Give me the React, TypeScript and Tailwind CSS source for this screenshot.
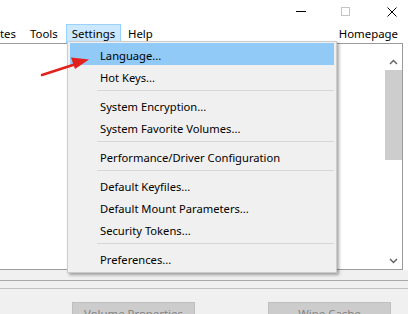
const FONT = 'font-["Noto_Sans","Segoe_UI",sans-serif]';

type Entry = { label: string; active?: boolean } | 'sep';

const ITEMS: Entry[] = [
  { label: 'Language...', active: true },
  { label: 'Hot Keys...' },
  'sep',
  { label: 'System Encryption...' },
  { label: 'System Favorite Volumes...' },
  'sep',
  { label: 'Performance/Driver Configuration' },
  'sep',
  { label: 'Default Keyfiles...' },
  { label: 'Default Mount Parameters...' },
  { label: 'Security Tokens...' },
  'sep',
  { label: 'Preferences...' },
];

function SettingsMenu() {
  return (
    <div className="absolute left-0 top-[calc(100%-1px)] z-20 w-[270px] border border-[#cccccc] bg-[#f0f0f0] px-[2px] pt-[1px] pb-[3px] text-[11.2px] shadow-[2px_2px_3px_rgba(0,0,0,0.35)]">
      {ITEMS.map((it, i) =>
        it === 'sep' ? (
          <div key={i} className="flex h-[7px] items-center pl-[27px]">
            <div className="h-px w-full bg-[#d7d7d7]" />
          </div>
        ) : (
          <div
            key={i}
            className={`h-[22px] pl-[30px] pt-[2px] leading-[22px] text-black ${it.active ? 'bg-[#91c9f7]' : ''}`}
          >
            {it.label}
          </div>
        )
      )}
    </div>
  );
}

function Chevron({ up }: { up?: boolean }) {
  return (
    <svg width="9" height="6" viewBox="0 0 9 6" className={up ? '' : 'rotate-180'}>
      <polyline points="1,5 4.5,1.5 8,5" fill="none" stroke="#606060" strokeWidth="1.4" />
    </svg>
  );
}

export default function App() {
  return (
    <div className={`relative h-[314px] w-[408px] overflow-hidden bg-white text-[11.4px] leading-none text-black ${FONT}`}>
      {/* title bar */}
      <div className="flex h-[24px] items-start">
        <div className="ml-[296px] mt-[11px] h-px w-[10px] bg-black" />
        <div className="ml-[35px] mt-[7px] h-[9px] w-[9px] border border-[#c4c4c4]" />
        <svg className="ml-[37px] mt-[7px]" width="10" height="10" viewBox="0 0 10 10">
          <path d="M0.5 0.5 L9.5 9.5 M9.5 0.5 L0.5 9.5" stroke="#000" strokeWidth="1" />
        </svg>
      </div>

      {/* menu bar */}
      <div className="relative z-10 flex h-[19px] items-stretch">
        <div className="flex w-[23px] items-center">tes</div>
        <div className="flex w-[43px] items-center pl-[7px]">Tools</div>
        <div className="relative flex w-[55px] items-center justify-center border border-[#99d1ff] bg-[#cce8ff]">
          Settings
          <SettingsMenu />
        </div>
        <div className="flex items-center pl-[7px]">Help</div>
        <div className="ml-auto mr-[10px] flex items-center">Homepage</div>
      </div>

      {/* volume list */}
      <div className="flex h-[227px] w-[403px] border-y border-r border-[#9a9a9a] bg-white">
        <div className="flex-1" />
        <div className="flex w-[17px] flex-col pt-[10px]">
          <div className="flex h-[16px] items-center justify-center">
            <Chevron up />
          </div>
          <div className="h-[90px] bg-[#cdcdcd]" />
          <div className="flex-1" />
          <div className="flex h-[17px] items-center justify-center">
            <Chevron />
          </div>
        </div>
      </div>

      {/* lower panel */}
      <div className="h-full bg-[#f0f0f0] pt-[10px]">
        <div className="h-px bg-[#a8a8a8]" />
        <div className="mt-[7px] h-px bg-[#c2c2c2]" />
        <div className="mt-[13px] flex gap-[73px] pl-[72px]">
          <div className="flex h-[23px] w-[123px] items-center justify-center border border-[#bfbfbf] bg-[#cccccc] text-[#838383]">
            Volume Properties
          </div>
          <div className="flex h-[23px] w-[123px] items-center justify-center border border-[#bfbfbf] bg-[#cccccc] text-[#838383]">
            Wipe Cache
          </div>
        </div>
      </div>

      {/* red annotation arrow */}
      <svg className="pointer-events-none absolute left-0 top-0 z-30" width="408" height="314">
        <line x1="42" y1="75" x2="76" y2="64" stroke="#e3201b" strokeWidth="2.5" strokeLinecap="round" />
        <polygon points="89,59.5 71,57.5 75,69" fill="#e3201b" />
      </svg>
    </div>
  );
}
